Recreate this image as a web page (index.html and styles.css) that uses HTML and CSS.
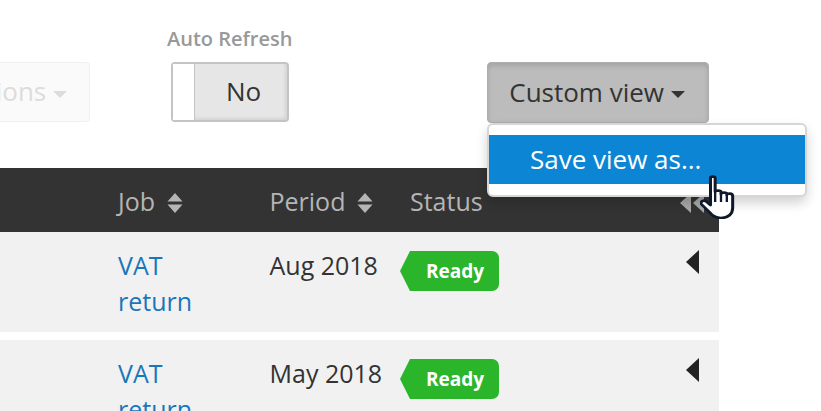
FILE: index.html
```html
<!DOCTYPE html>
<html lang="en">

<head>
    <title>Jobs</title>
    <link rel="stylesheet" href="styles.css">
</head>

<body>
    <div id="container">
        <div class="toolbar">
            <button type="button" class="btn btnOptions">Options <span class="caret"></span></button>
            <div class="refresh">
                <div class="refreshLabel">Auto Refresh</div>
                <div class="toggle">
                    <span class="knob"></span>
                    <span class="toggleText">No</span>
                </div>
            </div>
            <div class="customView">
                <button type="button" class="btn btnCustom">Custom view <span class="caret"></span></button>
                <div class="menu">
                    <div class="menuItem">Save view as...</div>
                </div>
            </div>
        </div>

        <div class="tableHead gridRow">
            <div class="cell">Job
                <svg class="sort" width="16" height="22" viewBox="0 0 16 22">
                    <path d="M8 1 L15.5 9.5 H0.5 Z M0.5 12.5 H15.5 L8 21 Z" />
                </svg>
            </div>
            <div class="cell">Period
                <svg class="sort" width="16" height="22" viewBox="0 0 16 22">
                    <path d="M8 1 L15.5 9.5 H0.5 Z M0.5 12.5 H15.5 L8 21 Z" />
                </svg>
            </div>
            <div class="cell">Status</div>
            <div class="cell cellArrow">
                <svg class="collapseAll" width="26" height="20" viewBox="0 0 26 20">
                    <path d="M11 0 V20 L0 10 Z M24 0 V20 L13 10 Z" />
                </svg>
            </div>
        </div>

        <div class="tableRow gridRow">
            <div class="cell"><a href="#" class="jobLink">VAT return</a></div>
            <div class="cell">Aug 2018</div>
            <div class="cell"><span class="ready">Ready</span></div>
            <div class="cell cellArrow">
                <svg class="rowArrow" width="13" height="24" viewBox="0 0 13 24">
                    <path d="M13 0 V24 L0 12 Z" />
                </svg>
            </div>
        </div>

        <div class="tableRow gridRow">
            <div class="cell"><a href="#" class="jobLink">VAT return</a></div>
            <div class="cell">May 2018</div>
            <div class="cell"><span class="ready">Ready</span></div>
            <div class="cell cellArrow">
                <svg class="rowArrow" width="13" height="24" viewBox="0 0 13 24">
                    <path d="M13 0 V24 L0 12 Z" />
                </svg>
            </div>
        </div>

        <svg class="pointer" width="35" height="44" viewBox="0 0 30 44" preserveAspectRatio="none">
            <path d="M9 3 C9 1 13 1 13 3 V17 C13 15 18 15 18 17 V19 C18 17 23 17 23 19 V20 C23 18 28 18 28 21 V33 C28 39 24 43 18 43 C13 43 10 40 8 37 L1 29 C0 27 3 24 6 27 L9 30 Z" fill="#fff" stroke="#10182b" stroke-width="2.6" stroke-linejoin="round" />
            <path d="M13 18 V27 M18 19 V27 M23 20 V27" fill="none" stroke="#10182b" stroke-width="2" />
        </svg>
    </div>
</body>

</html>
```

FILE: styles.css
```css
html,
body {
    margin: 0;
    padding: 0;
    background-color: white;
    overflow: hidden;
}

#container {
    position: relative;
    width: 821px;
    height: 411px;
    overflow: hidden;
    font-family: 'Open Sans', sans-serif;
    font-size: 25px;
    color: #333;
}

.toolbar {
    display: flex;
    align-items: flex-start;
    height: 168px;
    box-sizing: border-box;
}

.btn {
    font-family: inherit;
    font-size: 26px;
    color: #333;
    height: 61px;
    margin-top: 62px;
    padding-bottom: 2px;
    border-radius: 4px;
    white-space: nowrap;
}

.caret {
    display: inline-block;
    vertical-align: middle;
    border-top: 7px solid #333;
    border-left: 7.5px solid transparent;
    border-right: 7.5px solid transparent;
}

.btnOptions {
    width: 146px;
    margin-left: -56px;
    height: 60px;
    padding: 0 22px 2px 0;
    text-align: right;
    color: #dcdcdc;
    background-color: #fafafa;
    border: 1px solid #efefef;
}

.btnOptions .caret {
    border-top-color: #dcdcdc;
}

.refresh {
    margin-left: 81px;
    width: 125px;
}

.refreshLabel {
    height: 62px;
    margin-left: -4px;
    padding-top: 26px;
    box-sizing: border-box;
    font-size: 20px;
    line-height: 26px;
    font-weight: 600;
    color: #999;
    white-space: nowrap;
}

.toggle {
    display: flex;
    width: 118px;
    height: 60px;
    box-sizing: border-box;
    border: 2px solid #c4c4c4;
    border-radius: 4px;
    background-color: #e6e6e6;
    box-shadow: inset -2px -2px 3px #d4d4d4;
}

.knob {
    width: 21px;
    background-color: white;
    border-right: 1px solid #c4c4c4;
}

.toggleText {
    flex: 1;
    padding-left: 5px;
    text-align: center;
    font-size: 26px;
    line-height: 55px;
}

.customView {
    position: relative;
    margin-left: 191px;
}

.btnCustom {
    width: 222px;
    padding: 0 2px 2px 0;
    background-color: #bcbcbc;
    border: 1px solid #adadad;
    box-shadow: inset 0 3px 5px rgba(0, 0, 0, .125);
}

.menu {
    position: absolute;
    z-index: 2;
    top: 123px;
    left: 0;
    width: 320px;
    height: 74px;
    box-sizing: border-box;
    padding: 10px 0;
    background-color: white;
    border: 2px solid #d6d6d6;
    border-radius: 6px;
    box-shadow: 0 6px 12px rgba(0, 0, 0, .175);
}

.menuItem {
    padding-left: 41px;
    height: 49px;
    font-size: 26px;
    line-height: 49px;
    color: white;
    background-color: #0c86d4;
}

.gridRow {
    display: grid;
    grid-template-columns: 151.5px 140.5px 1fr 60px;
    width: 719px;
    box-sizing: border-box;
    padding-left: 118px;
}

.tableHead {
    height: 64px;
    line-height: 66px;
    color: #b5b5b5;
    background-color: #333;
}

.sort {
    fill: #b5b5b5;
    vertical-align: -3px;
    margin-left: 5px;
}

.collapseAll {
    fill: #a8a8a8;
    margin-top: 25px;
    margin-left: 21px;
}

.tableRow {
    height: 100px;
    margin-bottom: 8px;
    padding-top: 15px;
    line-height: 36px;
    background-color: #f1f1f1;
}

.jobLink {
    display: block;
    width: 90px;
    color: #1a76b9;
    text-decoration: none;
}

.ready {
    display: inline-block;
    position: relative;
    height: 40px;
    margin-top: 4px;
    padding: 0 15px 0 16px;
    line-height: 40px;
    font-size: 19px;
    font-weight: 700;
    color: white;
    background-color: #2bb52b;
    border-radius: 0 7px 7px 0;
    vertical-align: top;
}

.ready::before {
    content: "";
    position: absolute;
    top: 0;
    left: -10px;
    border-top: 20px solid transparent;
    border-bottom: 20px solid transparent;
    border-right: 10px solid #2bb52b;
}

.cellArrow {
    line-height: 0;
}

.rowArrow {
    fill: #222;
    margin-left: 27px;
    margin-top: 3px;
}

.pointer {
    position: absolute;
    z-index: 3;
    left: 700px;
    top: 175px;
}
```
